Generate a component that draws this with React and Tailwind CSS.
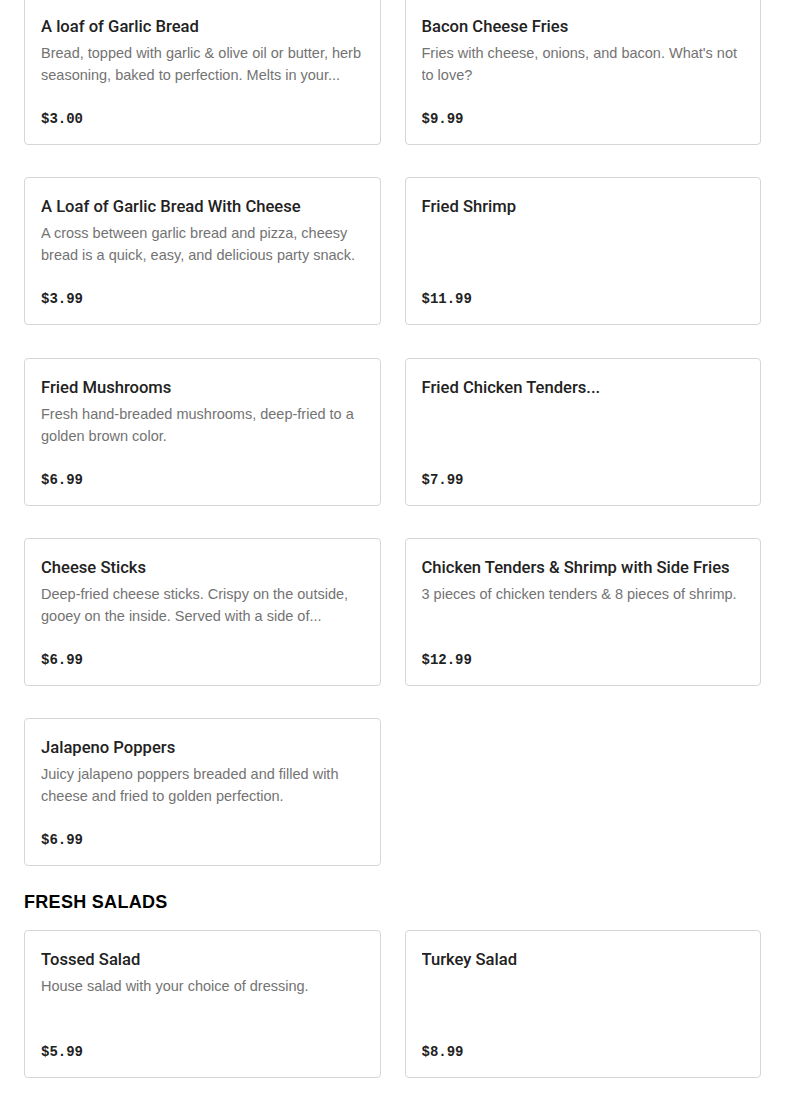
const appetizers = [
  { name: 'A loaf of Garlic Bread', desc: 'Bread, topped with garlic & olive oil or butter, herb seasoning, baked to perfection. Melts in your...', price: '$3.00' },
  { name: 'Bacon Cheese Fries', desc: "Fries with cheese, onions, and bacon. What's not to love?", price: '$9.99' },
  { name: 'A Loaf of Garlic Bread With Cheese', desc: 'A cross between garlic bread and pizza, cheesy bread is a quick, easy, and delicious party snack.', price: '$3.99' },
  { name: 'Fried Shrimp', desc: '', price: '$11.99' },
  { name: 'Fried Mushrooms', desc: 'Fresh hand-breaded mushrooms, deep-fried to a golden brown color.', price: '$6.99' },
  { name: 'Fried Chicken Tenders...', desc: '', price: '$7.99' },
  { name: 'Cheese Sticks', desc: 'Deep-fried cheese sticks. Crispy on the outside, gooey on the inside. Served with a side of...', price: '$6.99' },
  { name: 'Chicken Tenders & Shrimp with Side Fries', desc: '3 pieces of chicken tenders & 8 pieces of shrimp.', price: '$12.99' },
  { name: 'Jalapeno Poppers', desc: 'Juicy jalapeno poppers breaded and filled with cheese and fried to golden perfection.', price: '$6.99' },
]

const salads = [
  { name: 'Tossed Salad', desc: 'House salad with your choice of dressing.', price: '$5.99' },
  { name: 'Turkey Salad', desc: '', price: '$8.99' },
]

const MenuCard = ({ item }) => (
  <div className="flex flex-col h-[148px] border border-[#d6d6d6] rounded-[4px] bg-white px-4 pt-4 pb-[15px]">
    <h3 className="mt-px font-['Roboto',sans-serif] text-[16.6px] leading-6 font-medium text-[#222] truncate">{item.name}</h3>
    <p className="mt-[3px] text-[14.5px] leading-[22px] text-[#737373] line-clamp-2 min-h-[44px]">{item.desc}</p>
    <span className="mt-auto font-['Liberation_Mono',monospace] font-bold text-[14px] leading-5 text-[#222]">{item.price}</span>
  </div>
)

export default function App() {
  return (
    <div className="min-h-screen bg-white px-6 font-['Liberation_Sans',Arial,sans-serif]">
      <div className="grid grid-cols-2 gap-x-6 gap-y-[32.35px] -mt-[3px]">
        {appetizers.map((item, i) => <MenuCard key={i} item={item} />)}
      </div>

      <h2 className="mt-[22px] mb-[14px] text-[18px] leading-7 font-black tracking-[0.3px] text-black">FRESH SALADS</h2>

      <div className="grid grid-cols-2 gap-x-6 gap-y-8 pb-8">
        {salads.map((item, i) => <MenuCard key={i} item={item} />)}
      </div>
    </div>
  )
}
